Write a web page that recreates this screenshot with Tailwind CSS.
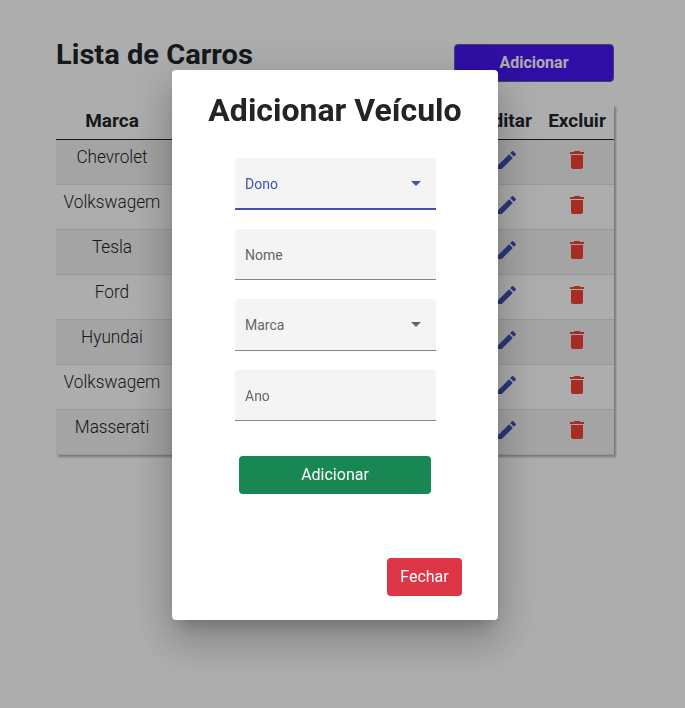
<!DOCTYPE html>
<html lang="pt-BR">
<head>
<meta charset="utf-8">
<title>Lista de Carros</title>
<script src="https://cdn.jsdelivr.net/npm/@tailwindcss/browser@4"></script>
</head>
<body class="h-[708px] overflow-hidden bg-white font-[Roboto,sans-serif] text-[#212529]">
<svg class="hidden">
  <symbol id="pencil" viewBox="0 0 24 24"><path d="M3 17.25V21h3.75L17.81 9.94l-3.75-3.75L3 17.25zM20.71 7.04a1 1 0 0 0 0-1.41l-2.34-2.34a1 1 0 0 0-1.41 0l-1.83 1.83 3.75 3.75 1.83-1.83z"/></symbol>
  <symbol id="trash" viewBox="0 0 24 24"><path d="M6 19c0 1.1.9 2 2 2h8c1.1 0 2-.9 2-2V7H6v12zM19 4h-3.500l-1-1h-5l-1 1H5v2h14V4z"/></symbol>
</svg>
<main class="flex h-full flex-col px-[56px] pt-[36px]">
  <header class="flex h-[69px] w-[558px] items-start justify-between">
    <h1 class="origin-left scale-x-[1.037] pt-px text-[28px] leading-[36px] font-bold whitespace-nowrap">Lista de Carros</h1>
    <button class="mt-2 h-[38px] w-[160px] rounded-[4px] border border-[#6b5ba8] bg-[#4516f3] text-[16px] font-bold text-white">Adicionar</button>
  </header>
  <section class="w-[558px] shadow-[2px_2px_2px_rgba(0,0,0,0.3)]">
    <div class="grid h-[35px] grid-cols-[112px_306px_66px_74px] border-b border-[#212529] pt-[2px] text-center text-[19px] leading-[28px] font-bold">
      <span>Marca</span><span></span><span>Editar</span><span>Excluir</span>
    </div>
    <div id="rows"></div>
  </section>
</main>
<div class="fixed inset-0 flex items-start bg-black/32 pt-[70px] pl-[172px]">
  <section class="flex h-[550px] w-[326px] flex-col items-center rounded-[4px] bg-white text-[#242424] shadow-[0_11px_15px_-7px_rgba(0,0,0,0.2),0_24px_38px_3px_rgba(0,0,0,0.14),0_9px_46px_8px_rgba(0,0,0,0.12)]">
    <h2 class="mt-[20px] h-[68px] text-[32px] leading-[40px] font-bold whitespace-nowrap">Adicionar Veículo</h2>
    <form class="flex w-[201px] flex-col text-[14px]">
      <div class="mb-[19px] flex h-[52px] items-center justify-between rounded-t-[4px] border-b-2 border-[#3f51b5] bg-[#f4f4f4] pr-[15px] pl-[10.5px] text-[#3f51b5]"><span class="pt-[2px]">Dono</span><svg class="h-[5px] w-[10px]" viewBox="0 0 10 5"><path d="M0 0h10L5 5z" fill="currentColor"/></svg></div>
      <div class="mb-[19px] flex h-[51px] items-center rounded-t-[4px] border-b border-[#858585] bg-[#f4f4f4] pl-[10.5px] text-[#666]"><span class="pt-[2px]">Nome</span></div>
      <div class="mb-[19px] flex h-[52px] items-center justify-between rounded-t-[4px] border-b border-[#858585] bg-[#f4f4f4] pr-[15px] pl-[10.5px] text-[#666]"><span class="pt-[1px]">Marca</span><svg class="h-[5px] w-[10px]" viewBox="0 0 10 5"><path d="M0 0h10L5 5z" fill="currentColor"/></svg></div>
      <div class="flex h-[51px] items-center rounded-t-[4px] border-b border-[#858585] bg-[#f4f4f4] pl-[10.5px] text-[#666]"><span class="pt-[2px]">Ano</span></div>
    </form>
    <button class="mt-[35px] h-[38px] w-[192px] rounded-[4px] bg-[#198754] text-[16px] text-white">Adicionar</button>
    <button class="mt-[64px] mr-[36px] h-[38px] w-[75px] self-end rounded-[4px] bg-[#dc3545] text-[16px] text-white">Fechar</button>
  </section>
</div>
<script>
const brands = ['Chevrolet', 'Volkswagem', 'Tesla', 'Ford', 'Hyundai', 'Volkswagem', 'Masserati'];
document.getElementById('rows').innerHTML = brands.map(brand => `
  <div class="grid h-[45px] grid-cols-[112px_306px_66px_74px] border-b border-[#dee2e6] text-center odd:bg-[#f2f2f2]">
    <span class="scale-x-[0.905] pt-[3px] text-[19px] leading-[28px] font-light">${brand}</span><span></span>
    <svg class="mt-[8px] h-[24px] w-[24px] justify-self-center fill-[#3f51b5]"><use href="#pencil"/></svg>
    <svg class="mt-[8px] h-[24px] w-[24px] justify-self-center fill-[#f44336]"><use href="#trash"/></svg>
  </div>`).join('');
</script>
</body>
</html>
